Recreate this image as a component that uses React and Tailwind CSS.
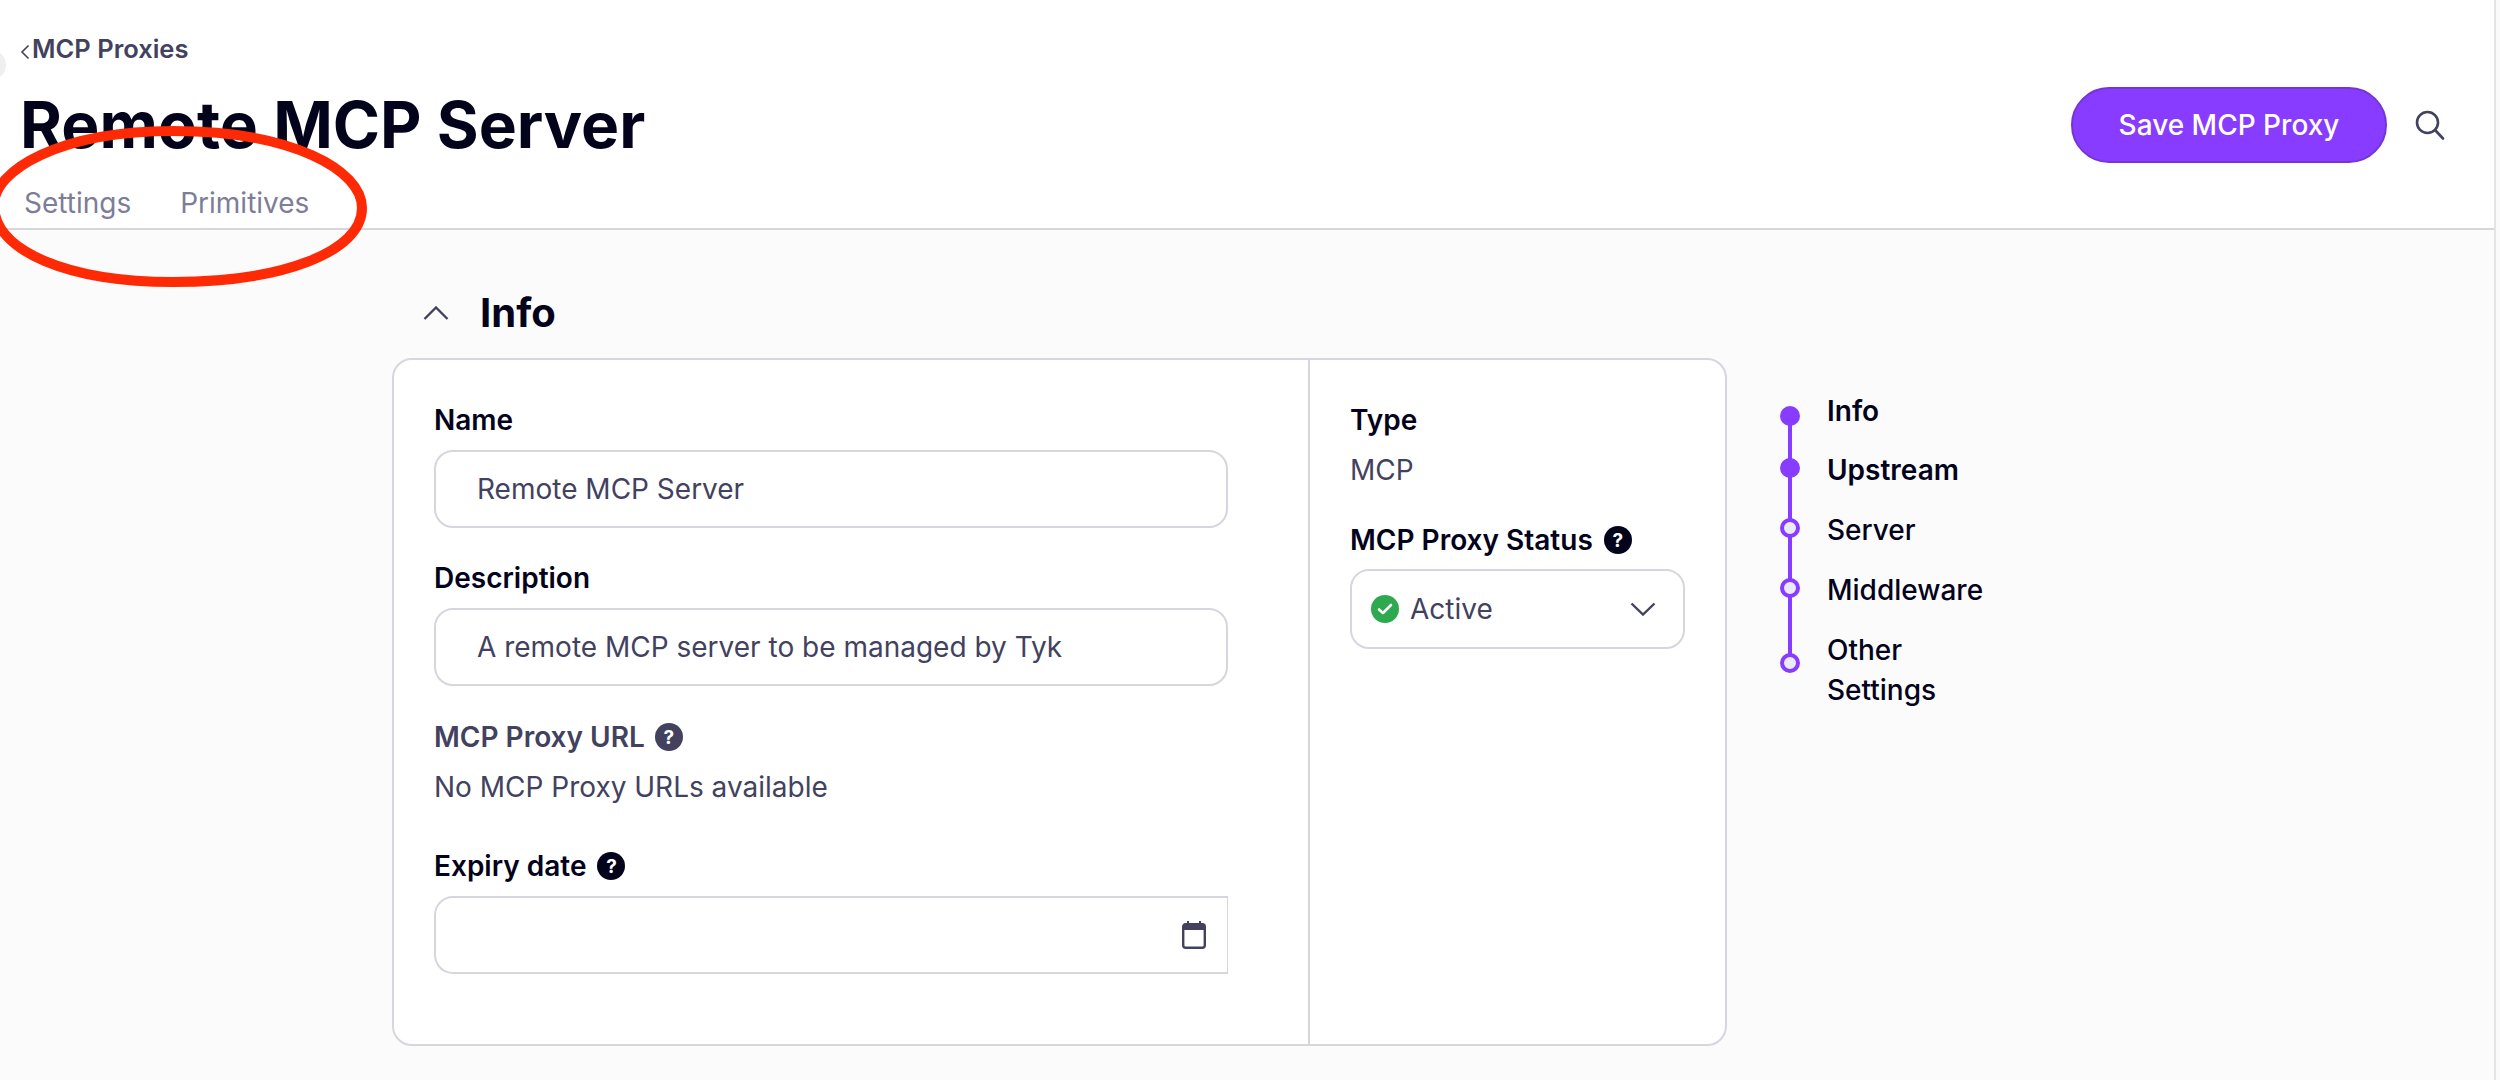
const helpClass =
  "flex h-[28px] w-[28px] items-center justify-center rounded-full text-[19px] leading-none font-bold text-white";

function Help({ color }) {
  return <span className={`${helpClass} ${color}`}>?</span>;
}

function Field({ label, value, className }) {
  return (
    <div className={className}>
      <div className="h-[30px] text-[28px] leading-[30px] font-semibold text-[#03031c]">{label}</div>
      <div className="mt-[15px] flex h-[78px] w-[794px] items-center rounded-[19px] border-2 border-[#d6d6e0] bg-white pl-[41px] text-[28px] text-[#42425f]">
        {value}
      </div>
    </div>
  );
}

function Stepper() {
  return (
    <div className="ml-[53px] flex">
      <div className="relative mt-[48px] flex h-[267px] w-[20px] flex-col">
        <div className="absolute top-[10px] left-[8px] h-[247px] w-[4px] bg-[#873cff]"></div>
        <div className="relative h-[20px] w-[20px] rounded-full bg-[#873cff]"></div>
        <div className="relative mt-[32px] h-[20px] w-[20px] rounded-full bg-[#873cff]"></div>
        <div className="relative mt-[40px] h-[20px] w-[20px] rounded-full border-[4px] border-[#873cff] bg-[#ebebf7]"></div>
        <div className="relative mt-[40px] h-[20px] w-[20px] rounded-full border-[4px] border-[#873cff] bg-[#ebebf7]"></div>
        <div className="relative mt-[55px] h-[20px] w-[20px] rounded-full border-[4px] border-[#873cff] bg-[#ebebf7]"></div>
      </div>
      <div className="mt-[33px] ml-[27px] w-[170px] text-[28px] leading-[40px] font-medium text-[#03031c]">
        <div className="font-semibold">Info</div>
        <div className="mt-[19px] font-semibold">Upstream</div>
        <div className="mt-[20px]">Server</div>
        <div className="mt-[20px]">Middleware</div>
        <div className="mt-[20px]">
          Other
          <br />
          Settings
        </div>
      </div>
    </div>
  );
}

export default function App() {
  return (
    <div className="relative flex h-[1080px] w-[2500px] overflow-hidden bg-[#fbfbfc] font-[Inter,sans-serif]">
      <div className="flex-1">
        <header className="flex h-[230px] justify-between border-b-2 border-[#d6d6e0] bg-white pr-[49px] pl-[20px]">
          <div className="pt-[34px]">
            <div className="flex h-[30px] items-center text-[25.5px] font-semibold text-[#42425f]">
              <svg width="10" height="16" viewBox="0 0 10 16" fill="none" className="mt-[5px] mr-[2px]">
                <path d="M8.5 1.5 2 8l6.5 6.5" stroke="#42425f" strokeWidth="1.6" />
              </svg>
              MCP Proxies
            </div>
            <h1 className="mt-[23px] h-[76px] text-[64px] leading-[76px] font-bold text-[#03031c]">Remote MCP Server</h1>
            <nav className="mt-[25px] ml-[4px] flex h-[30px] gap-[49px] text-[28px] leading-[30px] text-[#7d7d99]">
              <span>Settings</span>
              <span>Primitives</span>
            </nav>
          </div>
          <div className="flex h-[163px] items-center gap-[28px] pt-[87px]">
            <button className="h-[76px] w-[316px] rounded-full border-2 border-[#7535d6] bg-[#873cff] text-[28px] font-medium text-white">
              Save MCP Proxy
            </button>
            <svg width="30" height="30" viewBox="0 0 30 30" fill="none" stroke="#42425f" strokeWidth="2.6" strokeLinecap="round">
              <circle cx="12.5" cy="12.5" r="10.5" />
              <path d="m20.5 20.5 7.5 8" />
            </svg>
          </div>
        </header>

        <main className="pl-[392px]">
          <div className="mt-[58px] flex h-[50px] items-center">
            <svg width="26" height="14" viewBox="0 0 26 14" fill="none" className="ml-[31px]">
              <path d="M1.5 13 13 1.5 24.5 13" stroke="#42425f" strokeWidth="2.4" />
            </svg>
            <h2 className="ml-[31px] text-[40px] leading-[50px] font-bold text-[#03031c]">Info</h2>
          </div>

          <div className="mt-[20px] flex">
            <div className="flex h-[688px] w-[1335px] rounded-[20px] border-2 border-[#d6d6e0] bg-white">
              <div className="w-[916px] border-r-2 border-[#d6d6e0] pt-[45px] pl-[40px]">
                <Field label="Name" value="Remote MCP Server" />
                <Field label="Description" value="A remote MCP server to be managed by Tyk" className="mt-[35px]" />

                <div className="mt-[36px] flex h-[30px] items-center gap-[10px] text-[28px] font-semibold text-[#42425f]">
                  MCP Proxy URL
                  <Help color="bg-[#42425f]" />
                </div>
                <div className="mt-[20px] h-[30px] text-[28px] leading-[30px] text-[#42425f]">No MCP Proxy URLs available</div>

                <div className="mt-[49px] flex h-[30px] items-center gap-[11px] text-[28px] font-semibold text-[#03031c]">
                  Expiry date
                  <Help color="bg-[#03031c]" />
                </div>
                <div className="mt-[15px] flex h-[78px] w-[794px] items-center justify-end rounded-l-[19px] border-2 border-r-[1px] border-[#d6d6e0] bg-white pr-[21px]">
                  <svg width="24" height="28" viewBox="0 0 24 28" fill="none">
                    <path d="M6 0v5M18 0v5" stroke="#42425f" strokeWidth="2" />
                    <rect x="1.2" y="3.2" width="21.6" height="23.6" rx="2.5" stroke="#42425f" strokeWidth="2.4" fill="white" />
                    <path d="M1 5.5a3 3 0 0 1 3-3h16a3 3 0 0 1 3 3V9H1z" fill="#42425f" />
                  </svg>
                </div>
              </div>

              <div className="flex-1 pt-[45px] pl-[40px]">
                <div className="h-[30px] text-[28px] leading-[30px] font-semibold text-[#03031c]">Type</div>
                <div className="mt-[20px] h-[30px] text-[28px] leading-[30px] text-[#42425f]">MCP</div>
                <div className="mt-[40px] flex h-[30px] items-center gap-[11px] text-[28px] font-semibold text-[#03031c]">
                  MCP Proxy Status
                  <Help color="bg-[#03031c]" />
                </div>
                <div className="mt-[14px] flex h-[80px] w-[335px] items-center justify-between rounded-[19px] border-2 border-[#d6d6e0] bg-white pr-[27px] pl-[19px]">
                  <div className="flex items-center gap-[11px] text-[28px] text-[#42425f]">
                    <span className="flex h-[28px] w-[28px] items-center justify-center rounded-full bg-[#2ea94f]">
                      <svg width="16" height="12" viewBox="0 0 16 12" fill="none">
                        <path d="M2 6.5 6 10l8-8" stroke="white" strokeWidth="2.6" strokeLinecap="round" strokeLinejoin="round" />
                      </svg>
                    </span>
                    Active
                  </div>
                  <svg width="26" height="14" viewBox="0 0 26 14" fill="none">
                    <path d="M1.5 1.5 13 12.5 24.5 1.5" stroke="#42425f" strokeWidth="2.4" />
                  </svg>
                </div>
              </div>
            </div>
            <Stepper />
          </div>
        </main>
      </div>

      {/* thin strip along the right edge */}
      <div className="w-[6px] border-l-2 border-[#e4e4e6] bg-[#fafafa]"></div>

      <div className="absolute top-[50px] -left-[24px] h-[30px] w-[30px] rounded-full bg-[#efeff1]"></div>

      {/* red marker drawn over the screenshot */}
      <svg width="380" height="300" viewBox="0 0 380 300" fill="none" className="absolute top-0 left-0">
        <path
          d="M173 131C292 131 362 170 362 208C362 252 282 282 173 282C70 282 -6 252 -6 205C-6 170 60 131 173 131Z"
          stroke="#fe2a05"
          strokeWidth="10"
        />
      </svg>
    </div>
  );
}
